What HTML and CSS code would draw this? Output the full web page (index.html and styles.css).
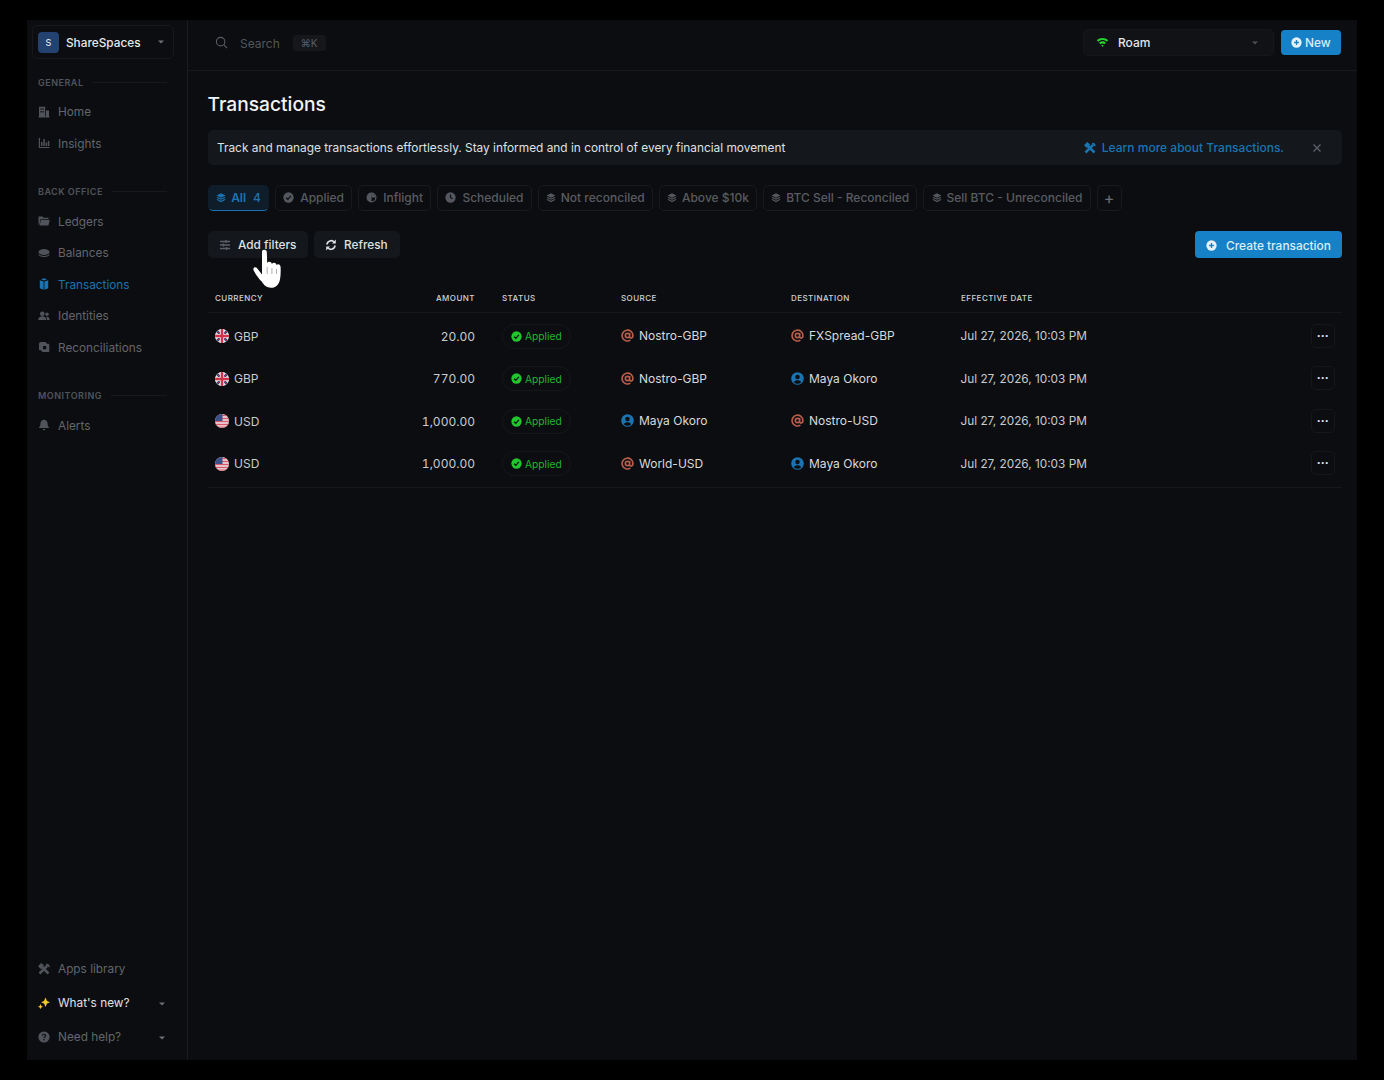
FILE: index.html
```html
<!DOCTYPE html>
<html lang="en">
<head>
    <meta charset="UTF-8">
    <title>Transactions</title>
    <link rel="stylesheet" href="styles.css">
</head>
<body>

<svg class="defs" width="0" height="0">
    <symbol id="i-stack" viewBox="0 0 12 12"><path d="M6 .4 11.400 3 6 5.600.6 3zM1.800 4.700 6 6.700l4.200-2 1.200.9L6 8.200.6 5.600zM1.800 7.300 6 9.300l4.200-2 1.200.9L6 11 .6 8.200z" fill="currentColor"/></symbol>
    <symbol id="i-check" viewBox="0 0 12 12"><circle cx="6" cy="6" r="5.600" fill="currentColor"/><path d="M3.400 6.200 5.300 8l3.300-3.700" fill="none" stroke="var(--tick)" stroke-width="1.400"/></symbol>
    <symbol id="i-half" viewBox="0 0 12 12"><circle cx="6" cy="6" r="4.800" fill="none" stroke="currentColor" stroke-width="1.400"/><path d="M6 1.200a4.800 4.800 0 0 0 0 9.600z" fill="currentColor"/><path d="M6 2a4 4 0 0 1 4 4H6z" fill="currentColor"/></symbol>
    <symbol id="i-clock" viewBox="0 0 12 12"><circle cx="6" cy="6" r="5.600" fill="currentColor"/><path d="M6 2.800V6l2.200 1.400" fill="none" stroke="#0c0e11" stroke-width="1.200"/></symbol>
    <symbol id="i-plus" viewBox="0 0 12 12"><circle cx="6" cy="6" r="5.600" fill="currentColor"/><path d="M6 3.400v5.200M3.400 6h5.200" stroke="var(--tick)" stroke-width="1.400"/></symbol>
    <symbol id="i-at" viewBox="0 0 12 12"><path d="M8 6a2 2 0 1 1-4 0 2 2 0 0 1 4 0zm0-2.200V7c0 1 .5 1.400 1.200 1.400S11 7.700 11 6.100A5 5 0 1 0 8.700 10.300" fill="none" stroke="currentColor" stroke-width="1.500"/></symbol>
    <symbol id="i-user" viewBox="0 0 12 12"><circle cx="6" cy="6" r="5.800" fill="currentColor"/><circle cx="6" cy="4.600" r="2.100" fill="#0c0e11"/><path d="M2.600 9.400C3.400 8 4.600 7.500 6 7.500s2.600.5 3.400 1.900A4.800 4.800 0 0 1 6 10.800a4.800 4.800 0 0 1-3.400-1.400z" fill="#0c0e11"/></symbol>
    <symbol id="i-tools" viewBox="0 0 12 12"><path d="M1.500 10.500 9 3M3 3l7.500 7.500" fill="none" stroke="currentColor" stroke-width="2.500"/><path d="M0 3.200 3.200 0l3 2.600L2.800 6zM7.800.8a3 3 0 0 1 3.700 3.700L9.400 3.600 8.400 2.600z" fill="currentColor"/></symbol>
    <symbol id="i-caret" viewBox="0 0 6 4"><path d="M0 .5h6L3 3.500z" fill="currentColor"/></symbol>
    <clipPath id="flag-clip"><circle cx="7" cy="7" r="7"/></clipPath>
    <symbol id="f-gbp" viewBox="0 0 14 14"><g clip-path="url(#flag-clip)"><rect width="14" height="14" fill="#e8e6ea"/><path d="M0 0 14 14M14 0 0 14" stroke="#2b3f73" stroke-width="2.400"/><path d="M0 0 14 14M14 0 0 14" stroke="#d5384d" stroke-width=".8"/><path d="M7 0v14M0 7h14" stroke="#e8e6ea" stroke-width="4.200"/><path d="M7 0v14M0 7h14" stroke="#d5304a" stroke-width="2.400"/></g></symbol>
    <symbol id="f-usd" viewBox="0 0 14 14"><g clip-path="url(#flag-clip)"><rect width="14" height="14" fill="#ece8ea"/><path d="M0 1.500h14M0 4.500h14M0 7.500h14M0 10.500h14M0 13.200h14" stroke="#d8566a" stroke-width="1.300"/><rect width="7.500" height="7" fill="#3c4f86"/></g></symbol>
</svg>

<div class="app">
    <aside class="sidebar">
        <div class="workspace">
            <span class="workspace-badge">S</span>
            <span class="workspace-name">ShareSpaces</span>
            <svg class="caret"><use href="#i-caret"/></svg>
        </div>

        <div class="nav-title"><span>GENERAL</span></div>
        <a class="nav-link">
            <svg viewBox="0 0 12 12"><path d="M1 .8h6.200v9.700H1zM2.500 2.300v1.500h1.200V2.300zm2 0v1.500h1.200V2.300zm-2 2.700v1.500h1.200V5zm2 0v1.500h1.200V5zM8 4.500h3v6H8zM.5 10.500h11v1H.5z" fill="currentColor" fill-rule="evenodd"/></svg>
            Home
        </a>
        <a class="nav-link">
            <svg viewBox="0 0 12 12"><path d="M.8 1H2v8.900h9.500V11H.8zM3 5h1.500v4H3zm2.300-3h1.500v7H5.300zm2.300 3.500h1.500V9H7.600zm2.200-1.500h1.500v5H9.800z" fill="currentColor"/></svg>
            Insights
        </a>

        <div class="nav-title nav-title-next"><span>BACK OFFICE</span></div>
        <a class="nav-link">
            <svg viewBox="0 0 12 12"><path d="M.5 1.500h4l1 1.200h5v1.500H2.500L1.500 9 .5 10zM3 5h8.800l-1.400 5.500H1.500z" fill="currentColor"/></svg>
            Ledgers
        </a>
        <a class="nav-link">
            <svg viewBox="0 0 12 12"><ellipse cx="6" cy="5" rx="5.500" ry="3" fill="currentColor"/><path d="M.5 6c0 1.700 2.500 3 5.500 3s5.500-1.300 5.500-3v1.200C11.500 8.900 9 10 6 10S.5 8.900.5 7.200z" fill="currentColor"/></svg>
            Balances
        </a>
        <a class="nav-link active">
            <svg viewBox="0 0 12 12"><path d="M1.800 2.200 5.600 3.400V11.800L1.800 10.200zM6.400 3.400 10.200 2.200V10.200L6.400 11.800z" fill="currentColor"/><path d="M3 1.300 6 .3 9 1.300 6 2.500z" fill="currentColor"/></svg>
            Transactions
        </a>
        <a class="nav-link">
            <svg viewBox="0 0 12 12"><circle cx="4.300" cy="3.800" r="2.300" fill="currentColor"/><circle cx="9" cy="4.300" r="1.700" fill="currentColor"/><path d="M.3 10c0-2.500 1.700-3.700 4-3.700s4 1.200 4 3.700zM9 10c0-1.300-.3-2.400-1-3.200 2-.5 3.700.6 3.700 3.200z" fill="currentColor"/></svg>
            Identities
        </a>
        <a class="nav-link">
            <svg viewBox="0 0 12 12"><path d="M3 1h4.500L9 2.800h1.500c.5 0 .8.300.8.800V10c0 .6-.4 1-1 1H4.500L3 9.200H1.600c-.4 0-.6-.3-.6-.7V3c0-1.200.8-2 2-2zM5 5v3.200h3.200V5z" fill="currentColor" fill-rule="evenodd"/></svg>
            Reconciliations
        </a>

        <div class="nav-title nav-title-last"><span>MONITORING</span></div>
        <a class="nav-link">
            <svg viewBox="0 0 12 12"><path d="M6 .8c2.300 0 3.600 1.700 3.600 3.900 0 1.900.6 2.700 1.400 3.600v.8H1v-.8c.8-.9 1.400-1.700 1.400-3.600C2.400 2.500 3.700.8 6 .8zM4.700 10h2.600c0 .8-.6 1.300-1.300 1.300S4.700 10.800 4.700 10z" fill="currentColor"/></svg>
            Alerts
        </a>

        <div class="sidebar-foot">
            <a class="nav-link foot-link">
                <svg><use href="#i-tools"/></svg>
                Apps library
            </a>
            <a class="nav-link foot-link whats-new">
                <svg viewBox="0 0 12 12"><path d="M7.500 .5 9 4 12 5.300 9 6.600 7.500 10 6 6.600 3 5.300 6 4z" fill="#f3c531"/><path d="M2.500 7 3.300 9 5 9.700 3.300 10.400 2.500 12 1.700 10.400 0 9.700 1.700 9z" fill="#f3c531"/></svg>
                What's new?
                <svg class="caret"><use href="#i-caret"/></svg>
            </a>
            <a class="nav-link foot-link">
                <svg viewBox="0 0 12 12"><circle cx="6" cy="6" r="5.600" fill="currentColor"/><path d="M4.300 4.700C4.400 3.700 5.100 3.200 6 3.200c1 0 1.700.6 1.700 1.400 0 1.200-1.600 1.200-1.700 2.500" fill="none" stroke="#0c0e11" stroke-width="1.100"/><circle cx="6" cy="8.700" r=".8" fill="#0c0e11"/></svg>
                Need help?
                <svg class="caret"><use href="#i-caret"/></svg>
            </a>
        </div>
    </aside>

    <div class="main">
        <header class="topbar">
            <svg class="search-icon" viewBox="0 0 12 12"><circle cx="5.200" cy="5.200" r="3.900" fill="none" stroke="currentColor" stroke-width="1"/><path d="m8.200 8.200 3 3" stroke="currentColor" stroke-width="1"/></svg>
            <span class="search-text">Search</span>
            <span class="kbd">⌘K</span>
            <div class="roam">
                <svg class="wifi" viewBox="0 0 14 12"><path d="M7 1C4.600 1 2.500 1.900.8 3.500l1.500 1.700C3.600 4 5.200 3.300 7 3.300s3.400.7 4.700 1.900l1.500-1.700C11.500 1.900 9.400 1 7 1zM3.300 6.200 4.800 8C5.400 7.400 6.200 7.100 7 7.100s1.600.3 2.200.9l1.500-1.800C9.700 5.300 8.400 4.700 7 4.700s-2.700.6-3.700 1.500zM5.700 9 7 10.800 8.300 9c-.8-.5-1.800-.5-2.600 0z" fill="#25d32f"/></svg>
                <span>Roam</span>
                <svg class="caret"><use href="#i-caret"/></svg>
            </div>
            <button class="btn-primary btn-new"><svg><use href="#i-plus"/></svg>New</button>
        </header>

        <main class="content">
            <h1>Transactions</h1>

            <div class="banner">
                <span class="banner-text">Track and manage transactions effortlessly. Stay informed and in control of every financial movement</span>
                <svg class="banner-icon"><use href="#i-tools"/></svg>
                <a class="banner-link">Learn more about Transactions.</a>
                <svg class="banner-close" viewBox="0 0 10 10"><path d="m1.500 1.500 7 7m0-7-7 7" stroke="currentColor" stroke-width="1.300"/></svg>
            </div>

            <div class="tabs">
                <div class="tab active"><svg><use href="#i-stack"/></svg>All<span class="tab-count">4</span></div>
                <div class="tab tab-round"><svg><use href="#i-check"/></svg>Applied</div>
                <div class="tab tab-round"><svg><use href="#i-half"/></svg>Inflight</div>
                <div class="tab tab-round"><svg><use href="#i-clock"/></svg>Scheduled</div>
                <div class="tab"><svg><use href="#i-stack"/></svg>Not reconciled</div>
                <div class="tab"><svg><use href="#i-stack"/></svg>Above $10k</div>
                <div class="tab"><svg><use href="#i-stack"/></svg>BTC Sell - Reconciled</div>
                <div class="tab"><svg><use href="#i-stack"/></svg>Sell BTC - Unreconciled</div>
                <div class="tab tab-add">+</div>
            </div>

            <div class="actions">
                <button class="btn">
                    <svg viewBox="0 0 12 12"><path d="M1 2.500h10M1 6h10M1 9.500h10" stroke="currentColor" stroke-width="1.300"/><path d="M7 1v3M4.500 4.500v3M7.500 8v3" stroke="currentColor" stroke-width="1.300"/></svg>
                    Add filters
                </button>
                <button class="btn">
                    <svg class="refresh" viewBox="0 0 12 12"><path d="M2 5.500A4.100 4.100 0 0 1 9.200 3.200M10 6.500a4.100 4.100 0 0 1-7.200 2.300" fill="none" stroke="currentColor" stroke-width="1.700"/><path d="M10.800 .6v3.800H7zM1.200 11.400V7.600H5z" fill="currentColor"/></svg>
                    Refresh
                </button>
                <button class="btn-primary btn-create"><svg><use href="#i-plus"/></svg>Create transaction</button>

                <svg class="cursor" viewBox="0 0 30 42"><path d="M9 3C9 1.500 10 .8 11.200 .8S13.800 1.500 13.800 3l.4 11c.4-.9 1.200-1.300 2.200-1.300 1.300 0 2.200.8 2.500 2.200.5-.8 1.200-1.200 2.100-1.200 1.300 0 2.200.9 2.500 2.200.5-.5 1.100-.8 1.800-.7 1.400.2 2.200 1.300 2.300 2.900.2 4.500.1 8.800-.6 12.300-1 4.800-4 8.300-9 8.300-4.400 0-7-2.300-9.200-6.200C6.500 30.500 3 25.500.8 21.800 0 20.300.2 19 1.200 18.400c1.100-.6 2.200-.1 3.100 1l4.700 6z" fill="#fff"/><path d="M14.200 18v7M18.900 19v6M23.500 20v5" stroke="#8a8c8e" stroke-width=".7"/></svg>
            </div>

            <div class="grid-row grid-head">
                <div>CURRENCY</div>
                <div class="amount">AMOUNT</div>
                <div>STATUS</div>
                <div>SOURCE</div>
                <div>DESTINATION</div>
                <div>EFFECTIVE DATE</div>
            </div>

            <div class="grid-body">
                <div class="grid-row">
                    <div class="cell"><svg class="flag"><use href="#f-gbp"/></svg>GBP</div>
                    <div class="amount">20.00</div>
                    <div><span class="status"><svg><use href="#i-check"/></svg>Applied</span></div>
                    <div class="cell party"><svg class="at"><use href="#i-at"/></svg>Nostro-GBP</div>
                    <div class="cell party"><svg class="at"><use href="#i-at"/></svg>FXSpread-GBP</div>
                    <div class="date">Jul 27, 2026, 10:03 PM</div>
                    <button class="more">&middot;&middot;&middot;</button>
                </div>
                <div class="grid-row">
                    <div class="cell"><svg class="flag"><use href="#f-gbp"/></svg>GBP</div>
                    <div class="amount">770.00</div>
                    <div><span class="status"><svg><use href="#i-check"/></svg>Applied</span></div>
                    <div class="cell party"><svg class="at"><use href="#i-at"/></svg>Nostro-GBP</div>
                    <div class="cell party"><svg class="person"><use href="#i-user"/></svg>Maya Okoro</div>
                    <div class="date">Jul 27, 2026, 10:03 PM</div>
                    <button class="more">&middot;&middot;&middot;</button>
                </div>
                <div class="grid-row">
                    <div class="cell"><svg class="flag"><use href="#f-usd"/></svg>USD</div>
                    <div class="amount">1,000.00</div>
                    <div><span class="status"><svg><use href="#i-check"/></svg>Applied</span></div>
                    <div class="cell party"><svg class="person"><use href="#i-user"/></svg>Maya Okoro</div>
                    <div class="cell party"><svg class="at"><use href="#i-at"/></svg>Nostro-USD</div>
                    <div class="date">Jul 27, 2026, 10:03 PM</div>
                    <button class="more">&middot;&middot;&middot;</button>
                </div>
                <div class="grid-row">
                    <div class="cell"><svg class="flag"><use href="#f-usd"/></svg>USD</div>
                    <div class="amount">1,000.00</div>
                    <div><span class="status"><svg><use href="#i-check"/></svg>Applied</span></div>
                    <div class="cell party"><svg class="at"><use href="#i-at"/></svg>World-USD</div>
                    <div class="cell party"><svg class="person"><use href="#i-user"/></svg>Maya Okoro</div>
                    <div class="date">Jul 27, 2026, 10:03 PM</div>
                    <button class="more">&middot;&middot;&middot;</button>
                </div>
            </div>
        </main>
    </div>
</div>

</body>
</html>
```

FILE: styles.css
```css
body {
    margin: 0;
    background-color: #000;
    color: #e6e8ea;
    font-family: 'Inter', sans-serif;
    font-size: 12px;
    height: 1080px;
    overflow: hidden;
    --tick: #0c0e11;
}

.defs {
    position: absolute;
}

.app {
    display: flex;
    width: 1330px;
    height: 1040px;
    margin: 20px 27px;
    background-color: #0c0d10;
}

/* sidebar */

.sidebar {
    display: flex;
    flex-direction: column;
    width: 161px;
    padding: 5px 0 0;
    box-sizing: border-box;
    border-right: 1px solid #1a1c20;
    flex-shrink: 0;
}

.workspace {
    display: flex;
    align-items: center;
    height: 34px;
    margin: 0 13px 0 5px;
    padding: 0 0 0 5px;
    border: 1px solid #16181c;
    border-radius: 5px;
    box-sizing: border-box;
    font-size: 11.8px;
    font-weight: 500;
    color: #e8e9eb;
}

.workspace-name {
    margin-top: 2px;
}

.workspace-badge {
    display: flex;
    align-items: center;
    justify-content: center;
    width: 21px;
    height: 21px;
    margin-right: 7px;
    background-color: #24426f;
    border-radius: 4px;
    font-size: 9px;
    color: #d9dee6;
}

.caret {
    width: 6px;
    height: 4px;
    margin-left: auto;
    color: #6c7076;
}

.workspace .caret {
    margin-right: 9px;
}

.nav-title {
    display: flex;
    align-items: center;
    gap: 9px;
    margin: 17px 20px 9.5px 11px;
    height: 12px;
    font-size: 9px;
    font-weight: 600;
    letter-spacing: 0.5px;
    color: #50545a;
}

.nav-title::after {
    content: "";
    flex: 1;
    height: 1px;
    background-color: #17191d;
}

.nav-title-next,
.nav-title-last {
    margin-top: 25px;
}

.nav-link {
    display: flex;
    align-items: center;
    height: 31.5px;
    padding: 0 22px 0 11px;
    gap: 8px;
    font-size: 11.8px;
    color: #62666c;
    line-height: 1;
}

.nav-link svg:first-child {
    width: 12px;
    height: 12px;
    margin-top: -3px;
    flex-shrink: 0;
    color: #50545a;
}

.nav-link.active,
.nav-link.active svg:first-child {
    color: #1b74b2;
}

.sidebar-foot {
    margin-top: auto;
    padding-bottom: 5px;
}

.foot-link {
    height: 34px;
}

.foot-link svg:first-child {
    margin-top: -2px;
}

.whats-new {
    color: #e0e2e4;
}

/* top bar */

.main {
    flex: 1;
    display: flex;
    flex-direction: column;
    min-width: 0;
}

.topbar {
    display: flex;
    align-items: center;
    height: 51px;
    padding: 0 16px 5px 28px;
    border-bottom: 1px solid #16181c;
    box-sizing: border-box;
}

.search-icon {
    width: 13px;
    height: 13px;
    margin-left: -1px;
    margin-right: 12px;
    color: #5a5e64;
}

.search-text {
    margin-top: 2px;
    margin-right: 13px;
    color: #52565c;
}

.kbd {
    padding: 2px 8px;
    background-color: #15171b;
    border-radius: 3px;
    font-size: 10px;
    color: #5a5e64;
}

.roam {
    display: flex;
    align-items: center;
    width: 191px;
    height: 27px;
    margin-left: auto;
    padding: 0 15px 0 12px;
    box-sizing: border-box;
    background-color: #101215;
    border: 1px solid #15171a;
    border-radius: 5px;
    font-weight: 500;
    color: #e3e5e7;
}

.roam .caret {
    color: #4e5258;
}

.wifi {
    width: 13px;
    height: 11px;
    margin-right: 9px;
}

.btn-primary {
    display: flex;
    align-items: center;
    border: none;
    border-radius: 4px;
    background-color: #1681c6;
    color: #d8edf9;
    font-family: 'Inter', sans-serif;
    font-size: 11.9px;
    font-weight: 500;
    --tick: #1681c6;
}

.btn-primary svg {
    width: 11px;
    height: 11px;
    color: #e4f1fa;
}

.btn-new {
    width: 60px;
    height: 25px;
    margin-left: 7px;
    padding: 0 0 0 10px;
    gap: 3px;
}

/* content */

.content {
    flex: 1;
    padding: 0 15px 0 20px;
}

h1 {
    margin: 21px 0 14px -0.5px;
    font-size: 19.2px;
    line-height: 24px;
    font-weight: 500;
    color: #f2f3f4;
}

.banner {
    display: flex;
    align-items: center;
    height: 35px;
    padding: 0 20px 0 9px;
    background-color: #14171b;
    border-radius: 5px;
    font-size: 11.87px;
    color: #dfe1e3;
}

.banner-icon {
    width: 12px;
    height: 12px;
    margin-left: auto;
    margin-right: 6px;
    color: #1b74b2;
}

.banner-link {
    font-size: 12px;
    font-weight: 500;
    color: #1b74b2;
}

.banner-close {
    width: 10px;
    height: 10px;
    margin-left: 28px;
    color: #5d6167;
}

.tabs {
    display: flex;
    gap: 6px;
    margin-top: 20px;
}

.tab {
    display: flex;
    align-items: center;
    gap: 5px;
    height: 26px;
    padding: 0 7.15px;
    border: 1px solid #181a1e;
    border-radius: 5px;
    box-sizing: border-box;
    line-height: 1;
    padding-bottom: 1px;
    font-weight: 500;
    color: #585c62;
    --tick: #0c0e11;
}

.tab svg {
    width: 10px;
    height: 10px;
    color: #54585e;
}

.tab-round {
    gap: 6px;
}

.tab-round svg {
    width: 11px;
    height: 11px;
}

.tab.active {
    width: 61px;
    background-color: #0f1d2a;
    border-color: #0f1d2a;
    border-bottom: 1px solid #1b74b2;
    color: #1b74b2;
    font-weight: 600;
}

.tab.active svg {
    color: #1b74b2;
}

.tab-count {
    margin-left: auto;
    font-weight: 500;
}

.tab-add {
    width: 25px;
    justify-content: center;
    padding: 0;
    font-size: 16px;
    font-weight: 400;
    color: #6a6e74;
}

.actions {
    position: relative;
    display: flex;
    gap: 6px;
    margin-top: 20px;
    height: 27px;
}

.btn {
    display: flex;
    align-items: center;
    gap: 7px;
    width: 100px;
    padding: 1px 11px 0;
    height: 27px;
    background-color: #14171b;
    border: none;
    border-radius: 5px;
    font-family: 'Inter', sans-serif;
    font-size: 11.8px;
    font-weight: 500;
    color: #dfe1e3;
}

.btn + .btn {
    width: 86px;
}

.btn svg {
    width: 12px;
    height: 12px;
    color: #5d6167;
}

.btn svg.refresh {
    color: #dfe1e3;
}

.btn-create {
    width: 147px;
    height: 27px;
    margin-left: auto;
    padding: 1px 0 0 11px;
    gap: 9px;
}

.cursor {
    position: absolute;
    left: 45px;
    top: 18px;
    width: 30px;
    height: 42px;
}

/* table */

.grid-row {
    position: relative;
    display: grid;
    grid-template-columns: 200px 60px 146px 170px 170px 1fr;
    align-items: center;
    height: 42.5px;
    padding-left: 7px;
    color: #c9cbce;
}

.grid-row > div:nth-child(3) {
    padding-left: 27px;
}

.grid-head {
    height: 27px;
    margin-top: 28px;
    padding-bottom: 3px;
    box-sizing: border-box;
    font-size: 8px;
    font-weight: 500;
    letter-spacing: 0.45px;
    color: #d0d2d4;
    border-bottom: 1px solid #15171a;
}

.grid-body {
    padding: 1.75px 0 2.25px;
    border-bottom: 1px solid #15171a;
}

.amount {
    text-align: right;
    font-variant-numeric: tabular-nums;
}

.date {
    margin-left: -0.5px;
    font-size: 11.8px;
}

.cell {
    display: flex;
    align-items: center;
    gap: 5px;
}

.flag {
    width: 14px;
    height: 14px;
}

.party {
    color: #d8dadc;
    margin-top: -1px;
}

.at {
    width: 13px;
    height: 13px;
    color: #b85d4c;
}

.person {
    width: 13px;
    height: 13px;
    color: #1b74b2;
}

.status {
    display: inline-flex;
    align-items: center;
    gap: 3px;
    height: 25px;
    padding: 0 8px;
    border: 1px solid #15171a;
    border-radius: 13px;
    box-sizing: border-box;
    font-size: 10.2px;
    color: #20b82c;
    --tick: #0c0e11;
}

.status svg {
    width: 11px;
    height: 11px;
    color: #22c52e;
}

.more {
    position: absolute;
    right: 7px;
    top: 9px;
    width: 24px;
    height: 24px;
    padding: 0;
    background: none;
    border: 1px solid #15171a;
    border-radius: 5px;
    font-size: 12px;
    font-weight: 700;
    line-height: 1;
    color: #e0e2e4;
}
```
